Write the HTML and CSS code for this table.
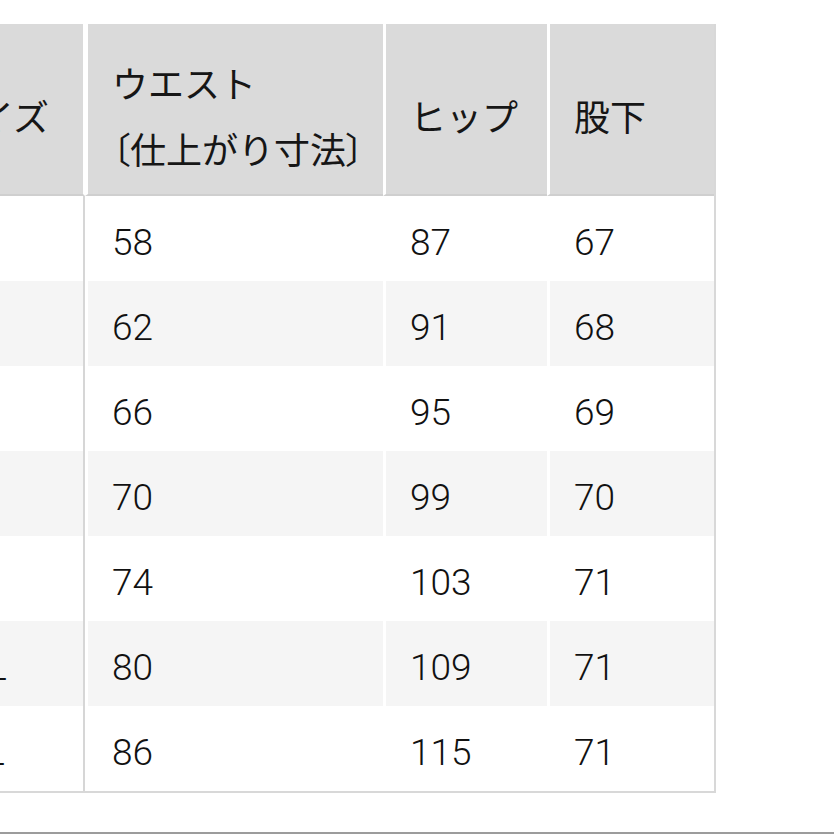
FILE: index.html
```html
<!DOCTYPE html>
<html lang="ja">
<head>
<meta charset="utf-8">
<title>サイズ表</title>
<link rel="stylesheet" href="styles.css">
</head>
<body>
<div class="page">
  <div class="sheet">
    <table class="size-table">
      <thead>
        <tr>
          <th class="c-size">サイズ</th>
          <th class="c-waist"><span class="line">ウエスト</span><span class="line"><span class="br">〔</span>仕上がり寸法<span class="br">〕</span></span></th>
          <th class="c-hip">ヒップ</th>
          <th class="c-inseam">股下</th>
        </tr>
      </thead>
      <tbody>
        <tr><td class="c-size">XS</td><td>58</td><td>87</td><td>67</td></tr>
        <tr class="alt"><td class="c-size">S</td><td>62</td><td>91</td><td>68</td></tr>
        <tr><td class="c-size">M</td><td>66</td><td>95</td><td>69</td></tr>
        <tr class="alt"><td class="c-size">L</td><td>70</td><td>99</td><td>70</td></tr>
        <tr><td class="c-size">XL</td><td>74</td><td>103</td><td>71</td></tr>
        <tr class="alt"><td class="c-size">XXL</td><td>80</td><td>109</td><td>71</td></tr>
        <tr><td class="c-size">3XL</td><td>86</td><td>115</td><td>71</td></tr>
      </tbody>
    </table>
  </div>
  <div class="footer-rule"></div>
</div>
</body>
</html>
```
FILE: styles.css
```css
html, body {
  margin: 0;
  padding: 0;
  background: #ffffff;
}

body {
  font-family: "Noto Sans CJK JP", "Noto Sans", sans-serif;
  color: #161616;
  overflow: hidden;
}

.page {
  width: 834px;
  height: 834px;
  display: flex;
  flex-direction: column;
  padding-top: 24px;
  box-sizing: border-box;
}

.sheet {
  margin-left: -82px;
  width: 798px;
  border-right: 2px solid #d8d8d8;
  border-bottom: 2px solid #d8d8d8;
  box-sizing: border-box;
}

.size-table {
  width: 796px;
  border-collapse: separate;
  border-spacing: 0;
  table-layout: fixed;
}

.size-table th,
.size-table td {
  box-sizing: border-box;
  text-align: left;
  vertical-align: middle;
  padding: 0 0 0 24px;
  font-weight: 400;
  border-left: 3px solid #ffffff;
  white-space: nowrap;
}

.size-table .c-size {
  border-left: 0;
  border-right: 2px solid #d6d6d6;
  width: 167px;
}

.size-table th.c-size {
  border-right-color: #ffffff;
}

.size-table .c-waist { width: 298px; }
.size-table .c-hip { width: 164px; }
.size-table .c-inseam { width: 167px; }

.size-table th {
  background: #dadada;
  height: 172px;
  border-bottom: 2px solid #cfcfcf;
  font-size: 36px;
  line-height: 66px;
  padding-top: 12px;
  padding-bottom: 0;
}

.size-table th .line {
  display: block;
}

.size-table th .br {
  font-feature-settings: "palt" 1;
}

.size-table td {
  height: 85px;
  padding-top: 8px;
  font-family: Roboto, "Noto Sans", sans-serif;
  font-size: 37px;
  font-weight: 300;
  line-height: 1;
  background: #ffffff;
  color: #111111;
}

.size-table tr.alt td {
  background: #f5f5f5;
}

.footer-rule {
  margin-top: auto;
  height: 2px;
  background: #9c9c9c;
}
```
